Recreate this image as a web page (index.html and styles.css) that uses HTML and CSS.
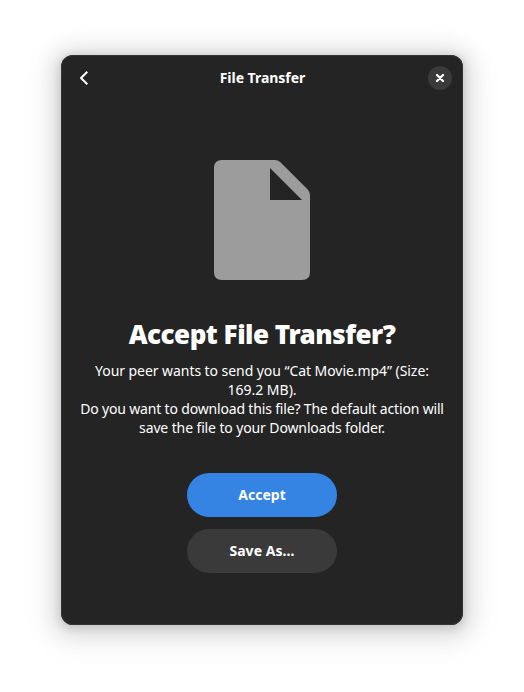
FILE: index.html
```html
<!DOCTYPE html>
<html lang="en">
<head>
<meta charset="utf-8">
<title>File Transfer</title>
<link rel="stylesheet" href="styles.css">
</head>
<body>
<main class="window">
  <header class="headerbar">
    <button class="back" aria-label="Back"><svg width="16" height="16" viewBox="0 0 16 16"><path d="M11.300 1.700 5 8l6.300 6.300" fill="none" stroke="#fff" stroke-width="2" stroke-linejoin="round"/></svg></button>
    <div class="title">File Transfer</div>
    <button class="close" aria-label="Close"><svg width="16" height="16" viewBox="0 0 16 16"><path d="m5 5 6 6m0-6-6 6" stroke="#fff" stroke-width="2.300" stroke-linecap="round"/></svg></button>
  </header>
  <svg class="document" width="96" height="120" viewBox="0 0 96 120"><path fill="#9c9c9c" fill-rule="evenodd" d="M8 0h52.700q3.300 0 5.700 2.300l27.300 27.300q2.300 2.400 2.300 5.700V112q0 8-8 8H8q-8 0-8-8V8q0-8 8-8zM56 8v32h32z"/></svg>
  <h1 class="heading">Accept File Transfer?</h1>
  <p class="description">
    <span class="line intro">Your peer wants to send you “Cat Movie.mp4” (Size:</span>
    <span class="line size">169.2 MB).</span>
    <span class="line">Do you want to download this file? The default action will</span>
    <span class="line closing">save the file to your Downloads folder.</span>
  </p>
  <div class="actions">
    <button class="pill suggested">Accept</button>
    <button class="pill">Save As…</button>
  </div>
</main>
</body>
</html>
```
FILE: styles.css
```css
* { box-sizing: border-box; }
body { margin: 0; height: 692px; padding: 55px 61px 67px; background: #fff; font-family: "Noto Sans", sans-serif; color: #fff; overflow: hidden; }
button { border: 0; padding: 0; color: inherit; font: inherit; }
.window { width: 402px; height: 570px; border-radius: 12px; background: #242424; box-shadow: inset 0 0 0 1px #333, 0 2px 8px 2px rgba(0,0,0,.13), 0 3px 20px 10px rgba(0,0,0,.09), 0 6px 32px 16px rgba(0,0,0,.04); display: flex; flex-direction: column; align-items: center; }
.headerbar { width: 100%; height: 46px; display: grid; grid-template-columns: 46px 1fr 46px; align-items: center; justify-items: center; }
.headerbar svg { display: block; }
.back { background: none; }
.close { width: 24px; height: 24px; border-radius: 50%; background: #3a3a3a; display: grid; place-items: center; }
.title { padding-left: 1px; font-size: 14px; font-weight: 700; line-height: 20px; white-space: nowrap; letter-spacing: -.03px; }
.document { display: block; margin-top: 59px; }
.heading { margin: 36px 0 0; font-size: 26px; line-height: 36px; font-weight: 900; white-space: nowrap; letter-spacing: -.49px; }
.description { margin: 9px 0 0; font-size: 14px; line-height: 19px; text-align: center; letter-spacing: -.17px; }
.line { display: block; white-space: nowrap; }
.intro { letter-spacing: -.06px; }
.size { letter-spacing: 0; }
.closing { letter-spacing: -.12px; }
.actions { margin-top: 36px; display: grid; gap: 12px; }
.pill { width: 150px; height: 44px; padding-bottom: 2px; border-radius: 22px; background: #3a3a3a; font-size: 14px; font-weight: 700; letter-spacing: .05px; }
.suggested { background: #3584e4; }
```
